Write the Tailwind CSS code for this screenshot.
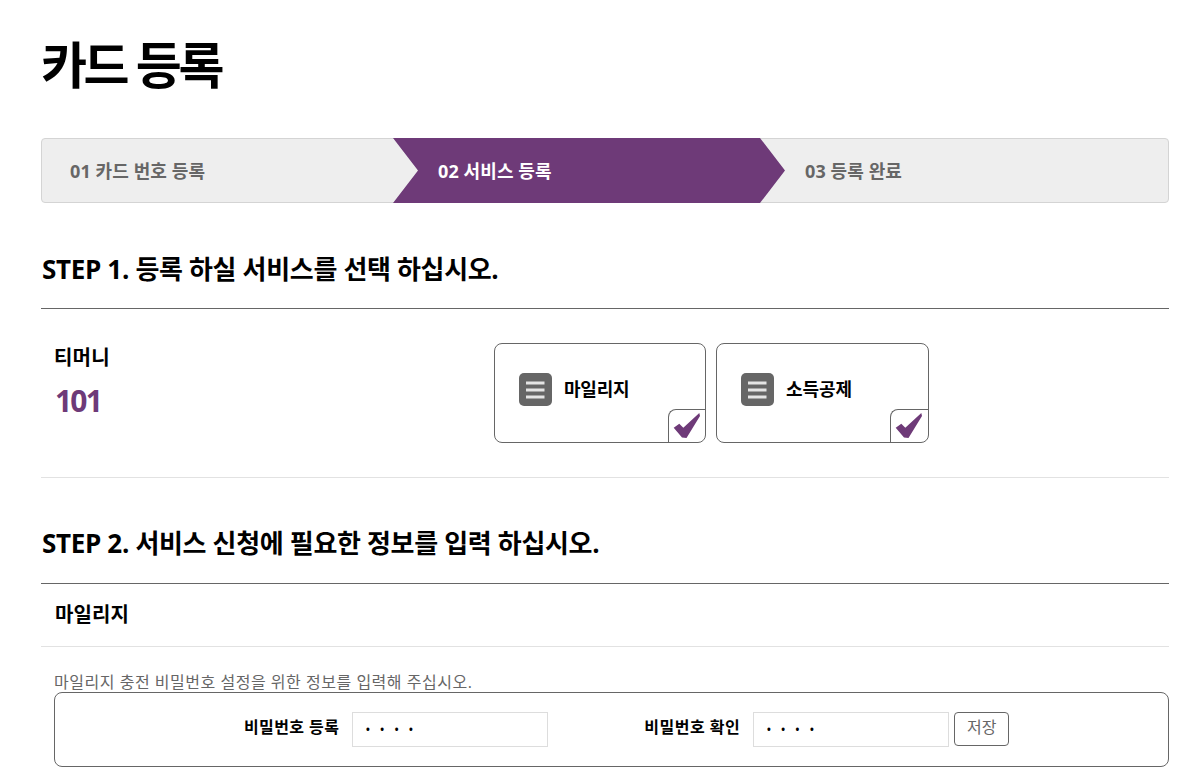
<!DOCTYPE html>
<html lang="ko">
<head>
    <meta charset="UTF-8">
    <title>카드 등록</title>
    <script src="https://cdn.jsdelivr.net/npm/@tailwindcss/browser@4"></script>
</head>
<body class="bg-white text-black overflow-hidden font-['Open_Sans','Noto_Sans_CJK_KR',sans-serif]">
<div class="h-[771px] overflow-hidden pl-[41px] pr-[24px]">

    <!-- Title -->
    <h1 class="h-[138px] pt-[27px] text-[50px] leading-[76px] font-bold tracking-[-3.4px]">카드 등록</h1>

    <!-- Steps -->
    <div class="h-[65px] flex items-stretch rounded-[4px] bg-[#eeeeee] border border-[#d4d4d4] text-[18px] font-bold tracking-[0.1px]">
        <div class="w-[351px] pl-[28px] pt-px flex items-center text-[#666666]">01 카드 번호 등록</div>
        <div class="w-[392px] -my-px pl-[45px] pt-px flex items-center bg-[#6e3a78] text-white [clip-path:polygon(0_0,367px_0,100%_50%,367px_100%,0_100%,25px_50%)]">02 서비스 등록</div>
        <div class="pl-[20px] pt-px flex items-center text-[#666666]">03 등록 완료</div>
    </div>

    <!-- Step 1 -->
    <h2 class="h-[106px] pt-[47px] pl-px text-[26px] leading-[38px] font-bold border-b border-[#666666] tracking-[-0.33px]">STEP 1. 등록 하실 서비스를 선택 하십시오.</h2>
    <div class="h-[169px] flex border-b border-[#e2e2e2] pt-[34px] pl-[14px]">
        <div class="w-[439px]">
            <div class="text-[20px] leading-[30px] font-bold -ml-px tracking-[0.2px]">티머니</div>
            <div class="mt-[8px] text-[30px] leading-[40px] font-bold text-[#6e3a78] tracking-[-1.8px]">101</div>
        </div>
        <div class="flex gap-[10px]">
            <div class="relative w-[212px] h-[100px] flex items-center gap-[12px] pl-[24px] pb-[7px] border border-[#666666] rounded-[8px]">
                <svg class="w-[33px] h-[33px]" viewBox="0 0 33 33"><rect width="33" height="33" rx="5" fill="#666666"/><path d="M7 10h18.500M7 17h18.500M7 24h18.500" stroke="#e4e4e4" stroke-width="3" fill="none"/></svg>
                <span class="text-[18px] font-bold tracking-[-0.2px]">마일리지</span>
                <div class="absolute right-0 bottom-0 w-[37px] h-[33px] border-l border-t border-[#666666] rounded-tl-[8px] rounded-br-[8px]">
                    <svg class="w-[36px] h-[32px]" viewBox="0 0 36 32"><path d="M4.700 17.700 10.300 13.700 14.300 17.700 30.300 3 31 6 17.500 28 13 27.500Z" fill="#6e3a78"/></svg>
                </div>
            </div>
            <div class="relative w-[213px] h-[100px] flex items-center gap-[12px] pl-[24px] pb-[7px] border border-[#666666] rounded-[8px]">
                <svg class="w-[33px] h-[33px]" viewBox="0 0 33 33"><rect width="33" height="33" rx="5" fill="#666666"/><path d="M7 10h18.500M7 17h18.500M7 24h18.500" stroke="#e4e4e4" stroke-width="3" fill="none"/></svg>
                <span class="text-[18px] font-bold tracking-[-0.1px]">소득공제</span>
                <div class="absolute right-0 bottom-0 w-[38px] h-[33px] border-l border-t border-[#666666] rounded-tl-[8px] rounded-br-[8px]">
                    <svg class="w-[36px] h-[32px]" viewBox="0 0 36 32"><path d="M4.700 17.700 10.300 13.700 14.300 17.700 30.300 3 31 6 17.500 28 13 27.500Z" fill="#6e3a78"/></svg>
                </div>
            </div>
        </div>
    </div>

    <!-- Step 2 -->
    <h2 class="h-[106px] pt-[46px] pl-px text-[26px] leading-[38px] font-bold border-b border-[#666666] tracking-[-0.33px]">STEP 2. 서비스 신청에 필요한 정보를 입력 하십시오.</h2>
    <div class="h-[63px] pl-[14px] flex items-center border-b border-[#e2e2e2] text-[20px] font-bold tracking-[0.1px]">마일리지</div>
    <div class="pl-[13px]">
        <p class="h-[45px] pt-[24px] text-[16px] leading-[22px] text-[#666666] tracking-[0.52px]">마일리지 충전 비밀번호 설정을 위한 정보를 입력해 주십시오.</p>
        <div class="h-[75px] flex items-center border border-[#666666] rounded-[8px] text-[16px]">
            <label class="ml-[189px] mb-[5px] font-bold tracking-[0.4px]">비밀번호 등록</label>
            <input type="text" value="• • • •" class="ml-[13px] w-[196px] h-[35px] px-[12px] border border-[#dddddd] text-[14px] tracking-[2.7px]">
            <label class="ml-[96px] mb-[5px] font-bold tracking-[0.5px]">비밀번호 확인</label>
            <input type="text" value="• • • •" class="ml-[13px] w-[196px] h-[35px] px-[12px] border border-[#dddddd] text-[14px] tracking-[2.7px]">
            <button class="ml-[5px] mb-[2px] w-[55px] h-[34px] pb-[4px] border border-[#666666] rounded-[4px] text-[#666666] text-[16px]">저장</button>
        </div>
    </div>
</div>
</body>
</html>
